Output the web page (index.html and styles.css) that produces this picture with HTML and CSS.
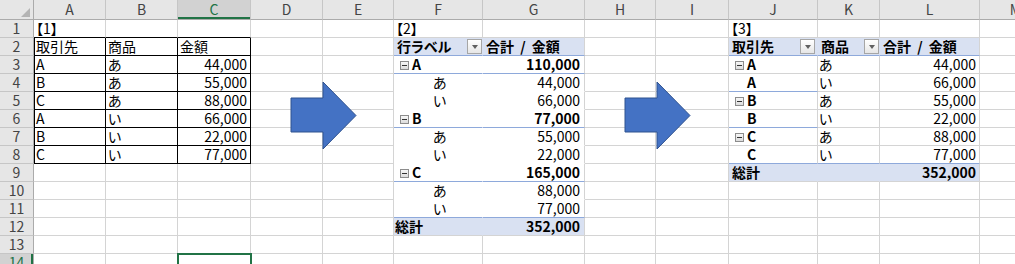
FILE: index.html
```html
<!DOCTYPE html>
<html lang="ja">
<head>
<meta charset="utf-8">
<title>Sheet</title>
<link rel="stylesheet" href="styles.css">
</head>
<body>
<div class="sheet">
  <div class="grid">
    <!-- header row -->
    <div class="k"><span class="tri"></span></div>
    <div class="h">A</div><div class="h">B</div><div class="h hs">C</div><div class="h">D</div><div class="h">E</div><div class="h">F</div><div class="h">G</div><div class="h">H</div><div class="h">I</div><div class="h">J</div><div class="h">K</div><div class="h">L</div><div class="h">M</div>
    <!-- row 1 -->
    <div class="r">1</div>
    <div class="c tb">【1】</div><div class="c tb"></div><div class="c tb"></div><div class="c"></div><div class="c"></div>
    <div class="c">【2】</div><div class="c"></div><div class="c"></div><div class="c"></div>
    <div class="c">【3】</div><div class="c"></div><div class="c"></div><div class="c"></div>
    <!-- row 2 -->
    <div class="r">2</div>
    <div class="c t tl">取引先</div><div class="c t">商品</div><div class="c t">金額</div><div class="c"></div><div class="c"></div>
    <div class="c ph pf"><span>行ラベル</span><span class="dd"><i></i></span></div><div class="c ph ws">合計 / 金額</div><div class="c"></div><div class="c"></div>
    <div class="c ph pf"><span>取引先</span><span class="dd dj"><i></i></span></div><div class="c ph pf"><span>商品</span><span class="dd"><i></i></span></div><div class="c ph ws">合計 / 金額</div><div class="c"></div>
    <!-- row 3 -->
    <div class="r">3</div>
    <div class="c t tl">A</div><div class="c t">あ</div><div class="c t n">44,000</div><div class="c"></div><div class="c"></div>
    <div class="c w bb b g2"><span class="mi"><i></i></span>A</div><div class="c bb n b p2n">110,000</div><div class="c"></div><div class="c"></div>
    <div class="c b g3"><span class="mi"><i></i></span>A</div><div class="c pk">あ</div><div class="c n">44,000</div><div class="c"></div>
    <!-- row 4 -->
    <div class="r">4</div>
    <div class="c t tl">B</div><div class="c t">あ</div><div class="c t n">55,000</div><div class="c"></div><div class="c"></div>
    <div class="c w wb s2">あ</div><div class="c wb n p2n">44,000</div><div class="c"></div><div class="c"></div>
    <div class="c b bb s3">A</div><div class="c pk">い</div><div class="c n">66,000</div><div class="c"></div>
    <!-- row 5 -->
    <div class="r">5</div>
    <div class="c t tl">C</div><div class="c t">あ</div><div class="c t n">88,000</div><div class="c"></div><div class="c"></div>
    <div class="c w wb s2">い</div><div class="c wb n p2n">66,000</div><div class="c"></div><div class="c"></div>
    <div class="c b g3"><span class="mi"><i></i></span>B</div><div class="c pk">あ</div><div class="c n">55,000</div><div class="c"></div>
    <!-- row 6 -->
    <div class="r">6</div>
    <div class="c t tl">A</div><div class="c t">い</div><div class="c t n">66,000</div><div class="c"></div><div class="c"></div>
    <div class="c w bb b g2"><span class="mi"><i></i></span>B</div><div class="c bb n b p2n">77,000</div><div class="c"></div><div class="c"></div>
    <div class="c b bb s3">B</div><div class="c pk">い</div><div class="c n">22,000</div><div class="c"></div>
    <!-- row 7 -->
    <div class="r">7</div>
    <div class="c t tl">B</div><div class="c t">い</div><div class="c t n">22,000</div><div class="c"></div><div class="c"></div>
    <div class="c w wb s2">あ</div><div class="c wb n p2n">55,000</div><div class="c"></div><div class="c"></div>
    <div class="c b g3"><span class="mi"><i></i></span>C</div><div class="c pk">あ</div><div class="c n">88,000</div><div class="c"></div>
    <!-- row 8 -->
    <div class="r">8</div>
    <div class="c t tl">C</div><div class="c t">い</div><div class="c t n">77,000</div><div class="c"></div><div class="c"></div>
    <div class="c w wb s2">い</div><div class="c wb n p2n">22,000</div><div class="c"></div><div class="c"></div>
    <div class="c b bb s3">C</div><div class="c pk bb">い</div><div class="c n bb">77,000</div><div class="c"></div>
    <!-- row 9 -->
    <div class="r">9</div>
    <div class="c"></div><div class="c"></div><div class="c"></div><div class="c"></div><div class="c"></div>
    <div class="c w bb b g2"><span class="mi"><i></i></span>C</div><div class="c bb n b p2n">165,000</div><div class="c"></div><div class="c"></div>
    <div class="c pt pf b tot3">総計</div><div class="c pt pf"></div><div class="c pt n b">352,000</div><div class="c"></div>
    <!-- row 10 -->
    <div class="r">10</div>
    <div class="c"></div><div class="c"></div><div class="c"></div><div class="c"></div><div class="c"></div>
    <div class="c w wb s2">あ</div><div class="c wb n p2n">88,000</div><div class="c"></div><div class="c"></div>
    <div class="c"></div><div class="c"></div><div class="c"></div><div class="c"></div>
    <!-- row 11 -->
    <div class="r">11</div>
    <div class="c"></div><div class="c"></div><div class="c"></div><div class="c"></div><div class="c"></div>
    <div class="c w bb s2">い</div><div class="c bb n p2n">77,000</div><div class="c"></div><div class="c"></div>
    <div class="c"></div><div class="c"></div><div class="c"></div><div class="c"></div>
    <!-- row 12 -->
    <div class="r">12</div>
    <div class="c"></div><div class="c"></div><div class="c"></div><div class="c"></div><div class="c"></div>
    <div class="c pt pf b tot2">総計</div><div class="c pt n b p2n">352,000</div><div class="c"></div><div class="c"></div>
    <div class="c"></div><div class="c"></div><div class="c"></div><div class="c"></div>
    <!-- row 13 -->
    <div class="r">13</div>
    <div class="c"></div><div class="c"></div><div class="c"></div><div class="c"></div><div class="c"></div>
    <div class="c"></div><div class="c"></div><div class="c"></div><div class="c"></div>
    <div class="c"></div><div class="c"></div><div class="c"></div><div class="c"></div>
    <!-- row 14 -->
    <div class="r rs">14</div>
    <div class="c"></div><div class="c"></div><div class="c sel"></div><div class="c"></div><div class="c"></div>
    <div class="c"></div><div class="c"></div><div class="c"></div><div class="c"></div>
    <div class="c"></div><div class="c"></div><div class="c"></div><div class="c"></div>
  </div>

  <svg class="arrow a1" width="67" height="69" viewBox="0 0 67 69" aria-hidden="true">
    <polygon points="1,17 33,17 33,1 66,34.5 33,68 33,51 1,51" fill="#4472c4" stroke="#2f528f" stroke-width="1"/>
  </svg>
  <svg class="arrow a2" width="67" height="69" viewBox="0 0 67 69" aria-hidden="true">
    <polygon points="1,17 33,17 33,1 66,34.5 33,68 33,51 1,51" fill="#4472c4" stroke="#2f528f" stroke-width="1"/>
  </svg>
</div>
</body>
</html>
```

FILE: styles.css
```css
html, body {
  margin: 0;
  padding: 0;
  background: #ffffff;
}
body {
  overflow: hidden;
}
.sheet {
  position: relative;
  width: 1015px;
  height: 264px;
  overflow: hidden;
  font-family: "Noto Sans CJK JP", "Noto Sans", sans-serif;
  font-size: 14px;
  color: #000;
  font-feature-settings: "palt";
}
.grid {
  display: grid;
  grid-template-columns: 34px 72px 72px 73px 72px 71px 89px 102px 71px 73px 89px 62px 100px 72px;
  grid-template-rows: 20px repeat(14, 18px);
  width: 1052px;
}
.grid > div {
  box-sizing: border-box;
  display: flex;
  align-items: flex-end;
  white-space: nowrap;
  line-height: 17px;
}

/* corner */
.k {
  background: #e6e6e6;
  border-right: 1px solid #ababab;
  border-bottom: 1px solid #ababab;
  justify-content: flex-end;
  padding: 0 3px 2px 0;
}
.tri {
  width: 0;
  height: 0;
  border-left: 9px solid transparent;
  border-bottom: 9px solid #b4b4b4;
}

/* column headers */
.h {
  background: #e6e6e6;
  border-right: 1px solid #c6c6c6;
  border-bottom: 1px solid #ababab;
  justify-content: center;
  color: #444;
  padding-bottom: 1px;
}
.hs {
  background: #d2d2d2;
  color: #217346;
  box-shadow: inset 0 -2px 0 #217346;
}

/* row headers */
.r {
  background: #e6e6e6;
  border-right: 1px solid #ababab;
  border-bottom: 1px solid #c6c6c6;
  justify-content: center;
  color: #444;
}
.rs {
  background: #d2d2d2;
  color: #217346;
  box-shadow: inset -2px 0 0 #217346;
}

/* cells */
.c {
  border-right: 1px solid #d4d4d4;
  border-bottom: 1px solid #d4d4d4;
  padding: 0 3px 0 2px;
}
.n {
  justify-content: flex-end;
}
.b {
  font-weight: 700;
}

/* table 1 borders */
.tb {
  border-bottom-color: #000;
}
.t {
  border-right-color: #000;
  border-bottom-color: #000;
}
.tl {
  box-shadow: inset 1px 0 0 #000;
}

/* pivot styles */
.ph {
  background: #d9e1f2;
  border-bottom-color: #8ea9db;
  font-weight: 700;
  padding-left: 3px;
}
.ws {
  font-feature-settings: normal;
  word-spacing: 3px;
}
.pf {
  border-right-color: #d9e1f2;
}
.pt {
  background: #d9e1f2;
}
.w {
  border-right-color: #fff;
}
.wb {
  border-bottom-color: #fff;
}
.bb {
  border-bottom-color: #8ea9db;
}
.p2n {
  padding-right: 4px;
}
.g2 {
  padding-left: 6px;
}
.s2 {
  padding-left: 39px;
}
.g3 {
  padding-left: 6px;
}
.s3 {
  padding-left: 18px;
}
.pk {
  padding-left: 1px;
}
.tot2 {
  padding-left: 1px;
}
.tot3 {
  padding-left: 3px;
}

/* dropdown button */
.dd {
  box-sizing: border-box;
  width: 15px;
  height: 15px;
  margin-left: auto;
  margin-right: -3px;
  margin-bottom: 1px;
  border: 1px solid #a6a6a6;
  background: linear-gradient(#ffffff, #e6e6e6);
  display: flex;
  align-items: center;
  justify-content: center;
}
.dj {
  margin-right: -1px;
}
.dd i {
  width: 0;
  height: 0;
  border-left: 3.5px solid transparent;
  border-right: 3.5px solid transparent;
  border-top: 4px solid #606060;
  margin-top: 1px;
}

/* collapse icon */
.mi {
  box-sizing: border-box;
  width: 9px;
  height: 9px;
  border: 1px solid #8c8c8c;
  background: linear-gradient(#f7f7f7, #dcdcdc);
  display: flex;
  align-items: center;
  justify-content: center;
  margin: 0 3px 3px 0;
}
.mi i {
  width: 5px;
  height: 1px;
  background: #333;
}

/* selection */
.sel {
  outline: 2px solid #217346;
  outline-offset: -1px;
  position: relative;
  z-index: 1;
}

/* arrows (shapes lying over the sheet) */
.arrow {
  position: absolute;
  top: 81px;
}
.a1 {
  left: 290px;
}
.a2 {
  left: 624px;
}
```
